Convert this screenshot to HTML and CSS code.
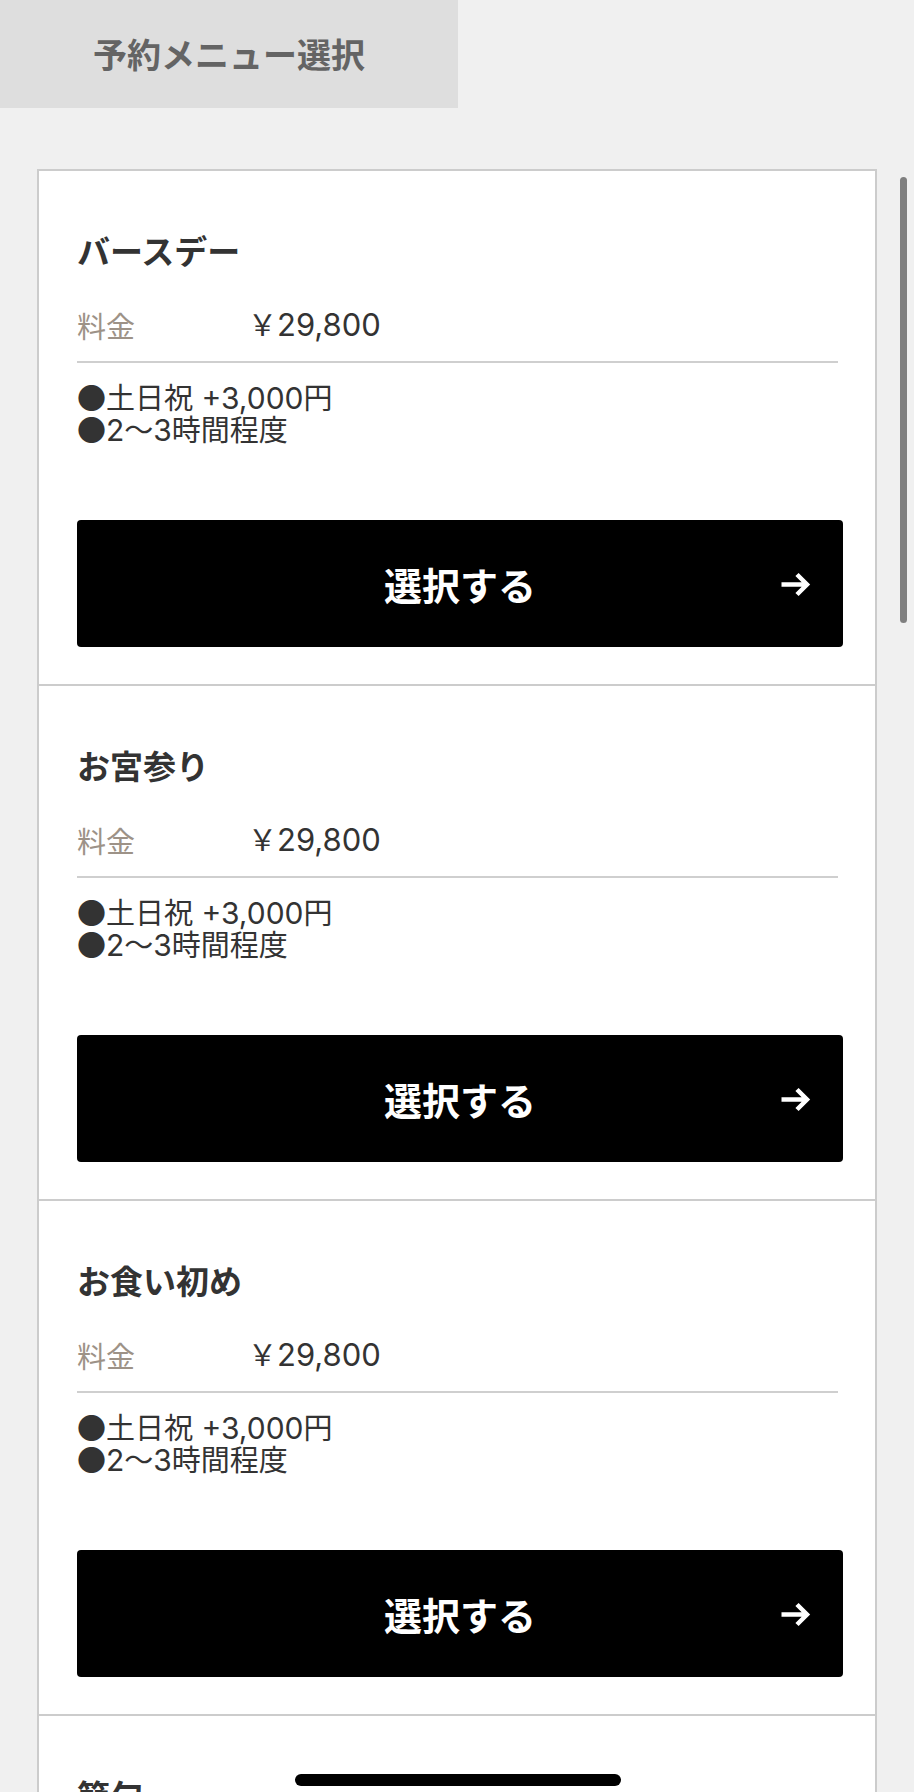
FILE: index.html
```html
<!DOCTYPE html>
<html lang="ja">
<head>
<meta charset="utf-8">
<title>予約メニュー選択</title>
<link rel="stylesheet" href="styles.css">
</head>
<body>
<header class="page-head">
  <h1 class="page-title">予約メニュー選択</h1>
</header>

<main class="menu-list">
  <section class="menu-item">
    <h2 class="menu-name">バースデー</h2>
    <div class="price-row"><span class="price-label">料金</span><span class="price-value"><span class="cjk">￥</span>29,800</span></div>
    <div class="notes"><p class="note"><span class="cjk">●土日祝</span> +3,000<span class="cjk">円</span></p><p class="note"><span class="cjk">●</span>2<span class="cjk">〜</span>3<span class="cjk">時間程度</span></p></div>
    <button class="select-btn" type="button"><span class="btn-spacer"></span><span class="btn-text">選択する</span><svg class="btn-arrow" width="30" height="27" viewBox="0 0 30 27"><path d="M0.5 13.5H26M16 3.5L26 13.5L16 23.5" fill="none" stroke="#fff" stroke-width="4.5" stroke-linecap="butt" stroke-linejoin="miter"/></svg></button>
  </section>
  <section class="menu-item">
    <h2 class="menu-name">お宮参り</h2>
    <div class="price-row"><span class="price-label">料金</span><span class="price-value"><span class="cjk">￥</span>29,800</span></div>
    <div class="notes"><p class="note"><span class="cjk">●土日祝</span> +3,000<span class="cjk">円</span></p><p class="note"><span class="cjk">●</span>2<span class="cjk">〜</span>3<span class="cjk">時間程度</span></p></div>
    <button class="select-btn" type="button"><span class="btn-spacer"></span><span class="btn-text">選択する</span><svg class="btn-arrow" width="30" height="27" viewBox="0 0 30 27"><path d="M0.5 13.5H26M16 3.5L26 13.5L16 23.5" fill="none" stroke="#fff" stroke-width="4.5" stroke-linecap="butt" stroke-linejoin="miter"/></svg></button>
  </section>
  <section class="menu-item">
    <h2 class="menu-name">お食い初め</h2>
    <div class="price-row"><span class="price-label">料金</span><span class="price-value"><span class="cjk">￥</span>29,800</span></div>
    <div class="notes"><p class="note"><span class="cjk">●土日祝</span> +3,000<span class="cjk">円</span></p><p class="note"><span class="cjk">●</span>2<span class="cjk">〜</span>3<span class="cjk">時間程度</span></p></div>
    <button class="select-btn" type="button"><span class="btn-spacer"></span><span class="btn-text">選択する</span><svg class="btn-arrow" width="30" height="27" viewBox="0 0 30 27"><path d="M0.5 13.5H26M16 3.5L26 13.5L16 23.5" fill="none" stroke="#fff" stroke-width="4.5" stroke-linecap="butt" stroke-linejoin="miter"/></svg></button>
  </section>
  <section class="menu-item">
    <h2 class="menu-name">節句</h2>
    <div class="price-row"><span class="price-label">料金</span><span class="price-value"><span class="cjk">￥</span>29,800</span></div>
    <div class="notes"><p class="note"><span class="cjk">●土日祝</span> +3,000<span class="cjk">円</span></p><p class="note"><span class="cjk">●</span>2<span class="cjk">〜</span>3<span class="cjk">時間程度</span></p></div>
    <button class="select-btn" type="button"><span class="btn-spacer"></span><span class="btn-text">選択する</span><svg class="btn-arrow" width="30" height="27" viewBox="0 0 30 27"><path d="M0.5 13.5H26M16 3.5L26 13.5L16 23.5" fill="none" stroke="#fff" stroke-width="4.5" stroke-linecap="butt" stroke-linejoin="miter"/></svg></button>
  </section>
</main>

<div class="scroll-thumb"></div>
<div class="home-indicator"></div>
</body>
</html>
```

FILE: styles.css
```css
html, body {
  margin: 0;
  padding: 0;
}
body {
  background: #f0f0f0;
  font-family: "Noto Sans CJK JP", "Noto Sans", sans-serif;
  color: #333;
  height: 1792px;
  overflow: hidden;
  position: relative;
}
.page-head {
  width: 458px;
  height: 108px;
  background: #dedede;
  display: flex;
  align-items: center;
  justify-content: center;
}
.page-title {
  margin: 0;
  font-size: 34px;
  font-weight: 700;
  color: #646464;
  line-height: 1;
}
.menu-list {
  margin: 61px 37px 0;
  border: 2px solid #cccccc;
  border-bottom: none;
  background: #fff;
}
.menu-item {
  padding: 57px 32px 37px 38px;
  border-bottom: 2px solid #cccccc;
  display: flex;
  flex-direction: column;
}
.menu-name {
  margin: 0;
  font-size: 33px;
  line-height: 44px;
  font-weight: 700;
  color: #333;
}
.price-row {
  margin: 33px 5px 0 0;
  height: 40px;
  padding-bottom: 16px;
  border-bottom: 2px solid #cfcfcf;
  display: flex;
  align-items: center;
  font-size: 29px;
  line-height: 40px;
}
.price-label {
  width: 171px;
  color: #9d9287;
}
.price-value {
  color: #333;
  font-family: "Inter", "Noto Sans CJK JP", sans-serif;
  font-size: 31px;
  line-height: 40px;
}
.notes {
  margin: 19px 0 0;
  display: flex;
  flex-direction: column;
}
.note {
  margin: 0;
  height: 32px;
  font-family: "Inter", "Noto Sans CJK JP", sans-serif;
  font-size: 30px;
  line-height: 32px;
  color: #333;
  white-space: nowrap;
}
.cjk {
  font-family: "Noto Sans CJK JP", sans-serif;
  font-size: 29px;
  line-height: 1;
}
.select-btn {
  margin-top: 74px;
  height: 127px;
  border: none;
  border-radius: 4px;
  background: #000;
  color: #fff;
  font-family: inherit;
  display: grid;
  grid-template-columns: 1fr auto 1fr;
  align-items: center;
  padding: 0 32px;
}
.btn-text {
  font-size: 38px;
  font-weight: 700;
}
.btn-arrow {
  justify-self: end;
  margin-top: 1px;
}
.scroll-thumb {
  position: absolute;
  left: 900px;
  top: 177px;
  width: 7px;
  height: 446px;
  border-radius: 4px;
  background: #7f7f7f;
}
.home-indicator {
  position: absolute;
  left: 295px;
  top: 1774px;
  width: 326px;
  height: 12px;
  border-radius: 6px;
  background: #000;
}
```
